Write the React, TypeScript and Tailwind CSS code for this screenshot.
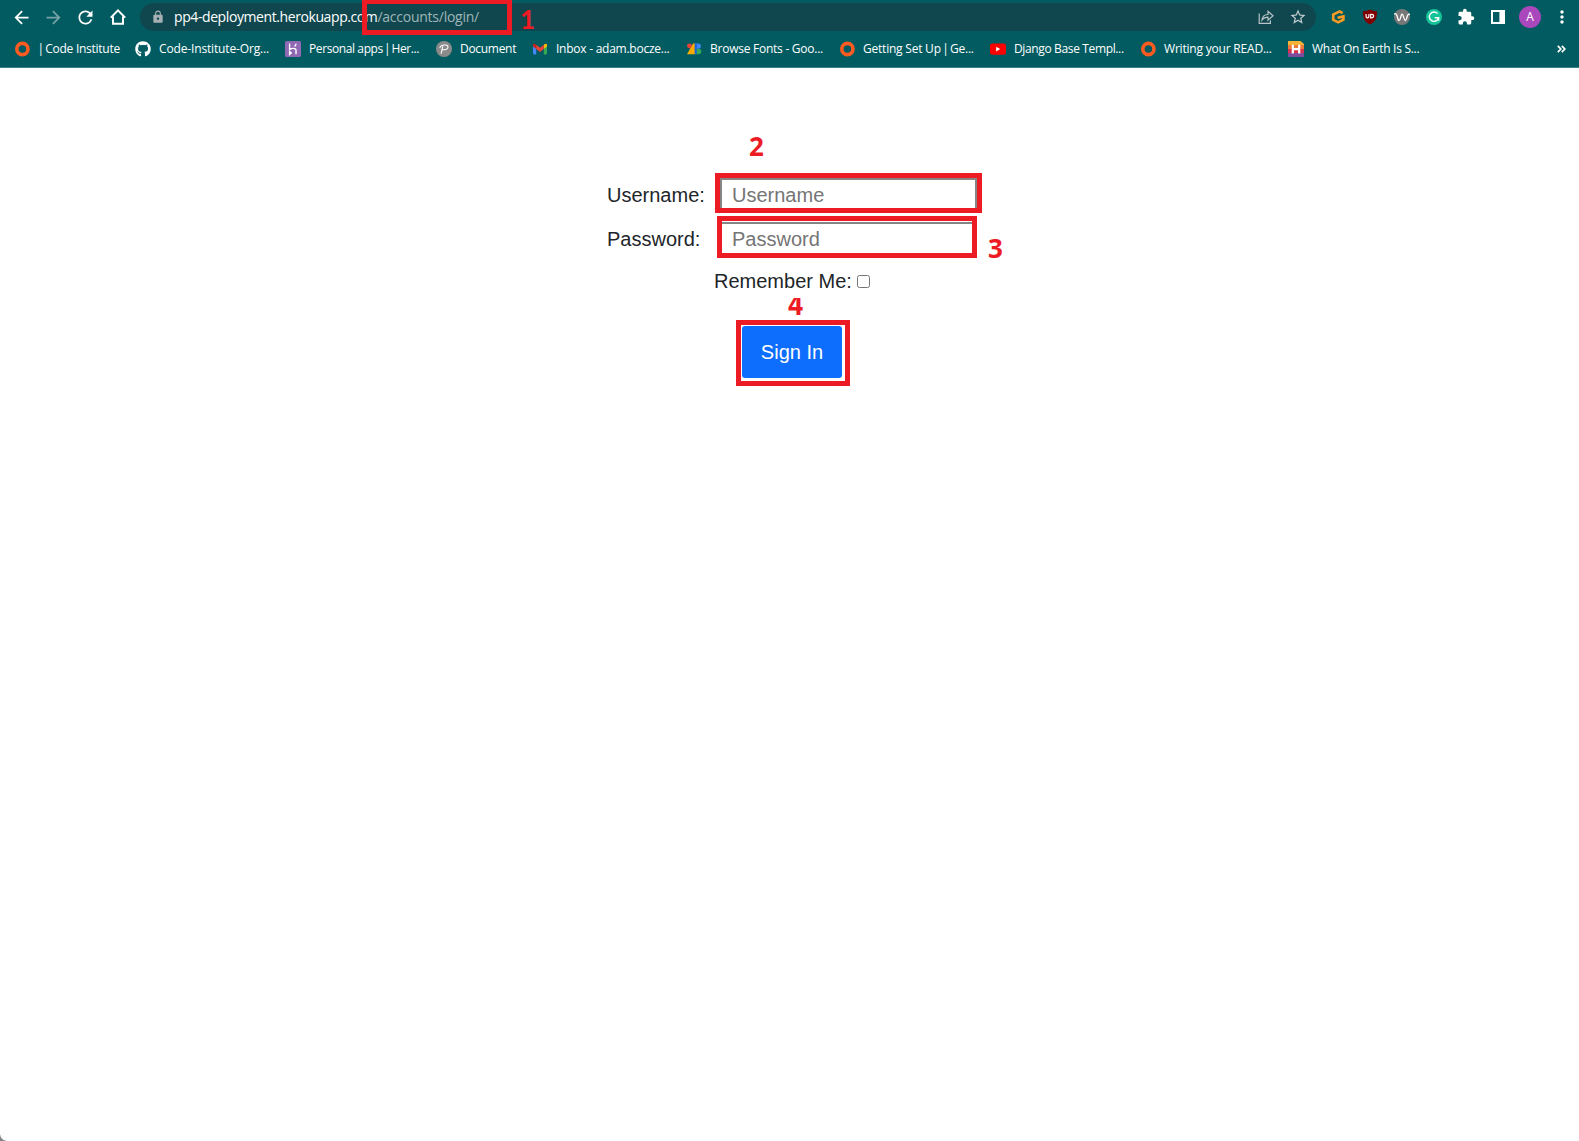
import React from "react";
import { MdArrowBack, MdArrowForward, MdRefresh, MdLock, MdStarBorder, MdExtension, MdMoreVert } from "react-icons/md";
import { FaGithub } from "react-icons/fa";

const Ring = () => (
  <svg width="16" height="16" viewBox="0 0 16 16"><circle cx="7.4" cy="8" r="5.6" fill="none" stroke="#ff5a1f" strokeWidth="3.6" /></svg>
);
const Heroku = () => (
  <svg width="16" height="16" viewBox="0 0 16 16">
    <rect width="16" height="16" rx="1.6" fill="#9068b4" />
    <path d="M4.6 2.6V8.4C6.5 7.4 11 6.4 11 9.3V13.2M4.6 10.4V13.4L6.2 11.9ZM11 2.8C11 4 10.5 4.8 9.6 5.6" fill="none" stroke="#fff" strokeWidth="1.4" />
  </svg>
);
const Doc = () => (
  <svg width="16" height="16" viewBox="0 0 16 16">
    <circle cx="8" cy="8" r="8" fill="#8a8a8a" />
    <path d="M5.2 12.3 6.7 5.6M4 6.6C4.6 3.6 12 2.8 12 6 12 8.6 8.6 9.2 6.4 8.5" fill="none" stroke="#fff" strokeWidth="1.1" strokeLinecap="round" />
  </svg>
);
const Gmail = () => (
  <svg width="16" height="16" viewBox="0 0 16 16">
    <path d="M1 4V12.6Q1 13.4 1.8 13.4H4.2V6.4Z" fill="#4285f4" />
    <path d="M15 4V12.6Q15 13.4 14.2 13.4H11.8V6.4Z" fill="#34a853" />
    <path d="M11.8 3.8 13 3Q15 2.1 15 4.2V5.6L11.8 8Z" fill="#fbbc04" />
    <path d="M4.2 3.8 8 6.7 11.8 3.8V8L8 10.9 4.2 8Z" fill="#ea4335" />
    <path d="M4.2 3.8 3 3Q1 2.1 1 4.2V5.6L4.2 8Z" fill="#c5221f" />
  </svg>
);
const Fonts = () => (
  <svg width="16" height="16" viewBox="0 0 16 16">
    <path d="M7 2.4H9.6V13.2H1Z" fill="#fbab00" />
    <circle cx="3.4" cy="4.8" r="2.4" fill="#ea4335" />
    <path d="M9 2.4H12.2A2.7 2.7 0 0 1 12.2 7.8H9Z" fill="#4285f4" />
    <path d="M9 7.8H12.6A2.7 2.7 0 0 1 12.6 13.2H9Z" fill="#34a853" />
    <path d="M8.6 2.4H10.8V13.2H8.6Z" fill="#1a62d6" />
  </svg>
);
const YouTube = () => (
  <svg width="16" height="16" viewBox="0 0 16 16"><rect y="2.4" width="16" height="11.4" rx="2.4" fill="#f00" /><path d="M6.2 5.8V10.4L10.2 8.1Z" fill="#fff" /></svg>
);
const Hacker = () => (
  <svg width="16" height="16" viewBox="0 0 16 16">
    <path d="M0 0H12.5L16 3V6H0Z" fill="#f5b335" />
    <path d="M0 4H16V8.2H0Z" fill="#ee7a3a" />
    <path d="M0 8H16V12H0Z" fill="#d9344b" />
    <path d="M0 12H16V16H0Z" fill="#7d4a9c" />
    <path d="M4.8 3.8V12.4M11.2 3.8V12.4M4.8 8.1H11.2" stroke="#fff" strokeWidth="2.2" />
  </svg>
);

const Bar = () => <span className="mx-[-1.5px]">|</span>;

const bookmarks = [
  { icon: <Ring />, label: <><Bar /> Code Institute</>, box: "w-[120px]", text: "tracking-[-0.26px]" },
  { icon: <FaGithub size={16} />, label: "Code-Institute-Org...", box: "w-[150px]", text: "tracking-[-0.15px]" },
  { icon: <Heroku />, label: <>Personal apps <Bar /> Her...</>, box: "w-[151px]", text: "tracking-[-0.4px]" },
  { icon: <Doc />, label: "Document", box: "w-[96px]", text: "tracking-[-0.3px]" },
  { icon: <Gmail />, label: "Inbox - adam.bocze...", box: "w-[154px]", text: "tracking-[-0.25px]" },
  { icon: <Fonts />, label: "Browse Fonts - Goo...", box: "w-[154px]", text: "tracking-[-0.25px]" },
  { icon: <Ring />, label: <>Getting Set Up <Bar /> Ge...</>, box: "w-[150px]", text: "ml-[-1px] tracking-[-0.22px]" },
  { icon: <YouTube />, label: "Django Base Templ...", box: "w-[151px]", text: "tracking-[-0.36px]" },
  { icon: <Ring />, label: "Writing your READ...", box: "w-[147px]", text: "ml-[-1px] tracking-[-0.2px]" },
  { icon: <Hacker />, label: "What On Earth Is S...", box: "w-[150px]", text: "tracking-[-0.3px]" },
];

const Slot = ({ children }: { children: React.ReactNode }) => (
  <div className="flex w-8 shrink-0 items-center justify-center">{children}</div>
);

function Toolbar() {
  return (
    <div className="flex h-[34px] items-center pl-[6px] text-white">
      <Slot><MdArrowBack size={21} className="mr-px" /></Slot>
      <Slot><MdArrowForward size={21} className="mr-px text-[#76a2a6]" /></Slot>
      <Slot><MdRefresh size={21} className="mr-px" /></Slot>
      <Slot>
        <svg width="18" height="18" viewBox="0 0 18 18" fill="none" stroke="#fff" strokeWidth="2"><path d="M1.8 9.6 9 2.4 16.2 9.6M4 8.4V15.8H14V8.4" /></svg>
      </Slot>
      <div className="ml-[6px] flex h-7 w-[1176px] items-center rounded-full bg-[#10474e] pl-[11px]">
        <MdLock size={14} className="text-[#a6b0b4]" />
        <div className="ml-[9px] flex w-[1076px] whitespace-pre text-[14px] leading-5">
          <span className="tracking-[-0.41px]">pp4-deployment.herokuapp.com</span>
          <span className="tracking-[-0.25px] text-[#9fb5b8]">/accounts/login/</span>
        </div>
        <Slot>
          <svg width="16" height="16" viewBox="0 0 16 16" fill="none" stroke="#b7c3c6" strokeWidth="1.2"><path d="M1.2 4.6V14.4H12.4V11.2M4 11C4.4 7.2 6.6 5.6 10 5.5V2.4L15 6.8 10 11.2V8.2C7.2 8.2 5.4 9 4 11Z" /></svg>
        </Slot>
        <Slot><MdStarBorder size={18} className="text-[#c3cdd0]" /></Slot>
      </div>
      <div className="ml-[6px] flex">
        <Slot>
          <svg width="16" height="16" viewBox="0 0 16 16" fill="none" stroke="#fb9a22" strokeWidth="2.6"><path d="M12.6 4.2 9.6 2.4 3.2 5.6V10.8L8.2 13.4 13.4 10.6V7.4L7.6 8.8" /></svg>
        </Slot>
        <Slot>
          <svg width="16" height="16" viewBox="0 0 16 16"><path d="M8 .6C6 1.8 3.6 2.2 1 2.2 1 9.4 2.4 12.6 8 15.6 13.6 12.6 15 9.4 15 2.2 12.4 2.2 10 1.8 8 .6Z" fill="#800000" /><path d="M4.1 5V7.4Q4.1 8.8 5.5 8.8T6.9 7.4V5M8.7 5.4H9.9A1.7 1.7 0 0 1 9.9 8.8H8.7Z" fill="none" stroke="#fff" strokeWidth="1.2" /></svg>
        </Slot>
        <Slot>
          <svg width="16" height="16" viewBox="0 0 16 16"><circle cx="8" cy="8" r="8" fill="#777" /><path d="M0 5.2C1.6 3.8 2.6 5 3.4 8 4.4 12.6 5.6 12.6 6.6 8.6 7.6 4 8.6 4 9.6 8.2 10.8 12.6 11.8 12.6 12.8 8.8 13.4 6 14.2 4.6 16 5.6" fill="none" stroke="#fff" strokeWidth="1.3" /></svg>
        </Slot>
        <Slot>
          <svg width="16" height="16" viewBox="0 0 16 16"><circle cx="8" cy="8" r="8" fill="#15c39a" /><path d="M11.6 4.6A4.7 4.7 0 1 0 12.6 8.8H8.8M12.6 8.8V11.8" fill="none" stroke="#fff" strokeWidth="1.4" /></svg>
        </Slot>
        <Slot><MdExtension size={18} /></Slot>
        <Slot>
          <svg width="16" height="16" viewBox="0 0 16 16"><path d="M1 1H15V15H1ZM3 3V13H9.4V3Z" fill="#fff" fillRule="evenodd" /></svg>
        </Slot>
        <Slot><div className="flex size-[22px] items-center justify-center rounded-full bg-[#ab47bc] text-[12px] leading-none">A</div></Slot>
        <Slot><MdMoreVert size={20} /></Slot>
      </div>
    </div>
  );
}

const mark = "absolute border-[5px] border-[#ed1c24]";
const digit = "absolute font-bold leading-none text-[#ed1c24]";

export default function App() {
  return (
    <div className="relative h-[1141px] w-[1579px] overflow-hidden bg-white font-['Open_Sans','Noto_Sans',sans-serif]">
      <header className="h-[68px] border-b border-[#3c7f84] bg-[#025b61]">
        <Toolbar />
        <div className="flex h-[30px] items-center pl-[15px] text-[12px] text-white">
          {bookmarks.map((b, i) => (
            <div key={i} className={`flex shrink-0 items-center gap-2 ${b.box}`}>
              <div className="size-4 shrink-0">{b.icon}</div>
              <span className={`whitespace-nowrap ${b.text}`}>{b.label}</span>
            </div>
          ))}
          <svg className="ml-[119px]" width="9" height="8" viewBox="0 0 9 8" fill="none" stroke="#fff" strokeWidth="1.7"><path d="M.8 .8 3.8 4 .8 7.2M4.8 .8 7.8 4 4.8 7.2" /></svg>
        </div>
      </header>

      <main className="pl-[607px] pt-[110px] font-['Liberation_Sans',Arial,sans-serif] text-[20px] leading-[30px] text-[#212529]">
        <div className="flex h-[44px] items-start">
          <label className="w-[113px] pt-[2px]">Username:</label>
          <input placeholder="Username" className="h-[34px] w-[257px] border-2 border-[#858585] pl-[10px] placeholder:text-[#757575]" />
        </div>
        <div className="flex h-[44px] items-start">
          <label className="w-[113px] pt-[2px]">Password:</label>
          <input placeholder="Password" className="h-[34px] w-[257px] border-2 border-[#858585] pl-[10px] placeholder:text-[#757575]" />
        </div>
        <div className="flex items-center pl-[107px]">
          <label className="w-[143px]">Remember Me:</label>
          <input type="checkbox" className="size-[13px] appearance-none rounded-[2.5px] border border-[#767676]" />
        </div>
        <button className="ml-[135px] mt-[30px] flex h-[52px] w-[100px] items-center justify-center rounded-[3px] bg-[#0d6efd] text-white">Sign In</button>
      </main>

      <div className={`${mark} left-[362px] top-[-1px] h-9 w-[150px]`} />
      <div className={`${mark} left-[715px] top-[173px] h-10 w-[267px]`} />
      <div className={`${mark} left-[717px] top-[216px] h-[42px] w-[260px]`} />
      <div className={`${mark} left-[736px] top-[320px] h-[66px] w-[114px]`} />
      <div className={`${digit} left-[520px] top-[6px] font-['Lato',sans-serif] text-[26px]`}>1</div>
      <div className={`${digit} left-[749px] top-[133px] text-[26px]`}>2</div>
      <div className={`${digit} left-[988px] top-[235px] text-[26px]`}>3</div>
      <div className="absolute left-[788px] top-[298px] h-[22px] w-5 overflow-hidden">
        <div className={`${digit} left-0 top-[-9px] origin-left scale-x-[0.88] text-[30px]`}>4</div>
      </div>
      <svg className="absolute bottom-0 left-0" width="7" height="7" viewBox="0 0 7 7"><path d="M0 0Q.6 6 7 7H0Z" fill="#858585" /></svg>
    </div>
  );
}
